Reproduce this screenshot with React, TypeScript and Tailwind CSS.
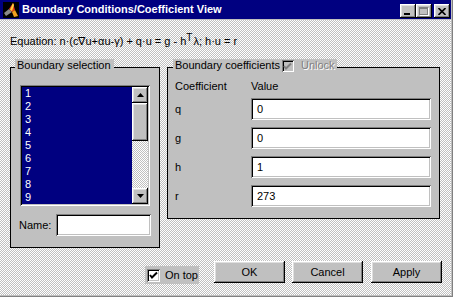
import React from 'react';

const raised =
  'shadow-[inset_-1px_-1px_0_#000,inset_1px_1px_0_#fff,inset_-2px_-2px_0_#808080,inset_2px_2px_0_#dfdfdf]';
const sunken =
  'shadow-[inset_1px_1px_0_#808080,inset_-1px_-1px_0_#fff,inset_2px_2px_0_#000,inset_-2px_-2px_0_#c0c0c0]';
const dither =
  'bg-[image:repeating-conic-gradient(#c0c0c0_0_25%,#ffffff_0_50%)] bg-[length:2px_2px]';

function Check({ color = '#000' }: { color?: string }) {
  return (
    <svg width="9" height="9" viewBox="0 0 9 9">
      <polyline points="1,4 3,6.5 8,1.5" fill="none" stroke={color} strokeWidth="2" />
    </svg>
  );
}

function Arrow({ up }: { up?: boolean }) {
  return (
    <svg width="7" height="4" viewBox="0 0 7 4">
      <polygon points={up ? '3.5,0 7,4 0,4' : '0,0 7,0 3.5,4'} fill="#000" />
    </svg>
  );
}

function Field({ value }: { value: string }) {
  return (
    <div className={`w-[180px] h-[22px] bg-white ${sunken} flex items-center pl-[6px]`}>{value}</div>
  );
}

export default function App() {
  const rows = [
    ['q', '0'],
    ['g', '0'],
    ['h', '1'],
    ['r', '273'],
  ];

  return (
    <div className="w-[453px] h-[297px] flex flex-col bg-[#c0c0c0] pr-[1px] pb-[1px] border-r border-b border-[#808080] text-[11px] leading-[13px] text-black font-['Liberation_Sans',Arial,sans-serif] overflow-hidden">
      {/* title bar */}
      <div className="h-[19px] mb-[1px] bg-[#000080] flex items-center pl-[3px] pr-[1px] shrink-0">
        <svg width="16" height="16" viewBox="0 0 16 16" className="shrink-0">
          <rect width="16" height="16" fill="#000" />
          <polygon points="1,11 6,7 9,10 3,14" fill="#8a8a8a" />
          <polygon points="6,7 10,1 12,8 9,10" fill="#e8401c" />
          <polygon points="9,10 12,8 15,14 11,15" fill="#f0a020" />
          <polygon points="10,1 11,3 9,9 7,8" fill="#ffd23a" />
        </svg>
        <span className="ml-[3px] text-white font-bold">Boundary Conditions/Coefficient View</span>
        <div className="ml-auto self-start pt-[4px] flex">
          <div className={`w-[16px] h-[14px] bg-[#c0c0c0] ${raised} flex items-end justify-center pb-[3px] pr-[2px]`}>
            <div className="w-[6px] h-[2px] bg-black" />
          </div>
          <div className={`w-[16px] h-[14px] bg-[#c0c0c0] ${raised} flex items-center justify-center pr-[1px]`}>
            <div className="w-[9px] h-[8px] border border-[#808080] border-t-2 shadow-[1px_1px_0_#fff]" />
          </div>
          <div className={`ml-[2px] w-[16px] h-[14px] bg-[#c0c0c0] ${raised} flex items-center justify-center pr-[1px]`}>
            <svg width="8" height="7" viewBox="0 0 8 7">
              <path d="M0.5 0 L7.5 7 M7.5 0 L0.5 7" stroke="#000" strokeWidth="1.6" />
            </svg>
          </div>
        </div>
      </div>

      {/* body */}
      <div className={`flex-1 flex flex-col pl-[10px] pr-[9px] ${dither}`}>
        <div className="mt-[15px] h-[13px] whitespace-nowrap">
          Equation: n·(c∇u+αu-γ) + q·u = g - h<span className="text-[10px] relative -top-[4px] mr-[1px]">T</span>λ; h·u = r
        </div>

        <div className="mt-[19px] flex items-start gap-[7px]">
          {/* boundary selection */}
          <div className="relative w-[150px] h-[181px] border border-black bg-[#c0c0c0] flex flex-col">
            <div className="absolute left-[4px] -top-[9px] h-[13px] pl-[2px] pr-[3px] bg-[#c0c0c0]">Boundary selection</div>
            <div className={`ml-[9px] mt-[17px] w-[130px] h-[121px] p-[2px] flex bg-[#000080] ${sunken}`}>
              <div className="flex-1 pl-[3px] text-white">
                {[1, 2, 3, 4, 5, 6, 7, 8, 9].map((n) => (
                  <div key={n} className="h-[13px]">{n}</div>
                ))}
              </div>
              <div className="w-[16px] flex flex-col">
                <div className={`h-[16px] bg-[#c0c0c0] ${raised} flex items-center justify-center pb-[1px]`}>
                  <Arrow up />
                </div>
                <div className={`h-[38px] bg-[#c0c0c0] ${raised}`} />
                <div className={`flex-1 ${dither}`} />
                <div className={`h-[16px] bg-[#c0c0c0] ${raised} flex items-center justify-center pb-[1px]`}>
                  <Arrow />
                </div>
              </div>
            </div>
            <div className="mt-[8px] ml-[8px] flex items-center">
              <span className="w-[37px]">Name:</span>
              <div className={`w-[95px] h-[22px] bg-white ${sunken}`} />
            </div>
          </div>

          {/* boundary coefficients */}
          <div className="relative w-[273px] h-[152px] border border-black bg-[#c0c0c0] pl-[7px] pt-[12px]">
            <div className="absolute left-[5px] -top-[9px] h-[13px] pl-[2px] pr-[2px] bg-[#c0c0c0] flex items-start">
              <span>Boundary coefficients</span>
              <div className={`ml-[2px] mt-[1px] w-[12px] h-[12px] bg-[#c0c0c0] ${sunken} flex items-center justify-center`}>
                <Check color="#808080" />
              </div>
              <span className="ml-[7px] text-[#808080] [text-shadow:1px_1px_0_#fff]">Unlock</span>
            </div>
            <div className="flex h-[13px]">
              <span className="w-[76px]">Coefficient</span>
              <span>Value</span>
            </div>
            <div className="mt-[5px] flex flex-col gap-[7px]">
              {rows.map(([k, v]) => (
                <div key={k} className="flex items-center">
                  <span className="w-[76px]">{k}</span>
                  <Field value={v} />
                </div>
              ))}
            </div>
          </div>
        </div>

        {/* bottom buttons */}
        <div className="mt-[13px] flex items-start justify-end">
          <div className="mt-[5px] h-[18px] pl-[2px] pr-[1px] bg-[#c0c0c0] flex items-center">
            <div className={`w-[13px] h-[13px] bg-white ${sunken} flex items-center justify-center`}>
              <Check />
            </div>
            <span className="ml-[5px]">On top</span>
          </div>
          <button className={`ml-[15px] w-[71px] h-[22px] bg-[#c0c0c0] ${raised}`}>OK</button>
          <button className={`ml-[7px] w-[71px] h-[22px] bg-[#c0c0c0] ${raised}`}>Cancel</button>
          <button className={`ml-[8px] w-[71px] h-[22px] bg-[#c0c0c0] ${raised}`}>Apply</button>
        </div>
      </div>
    </div>
  );
}
